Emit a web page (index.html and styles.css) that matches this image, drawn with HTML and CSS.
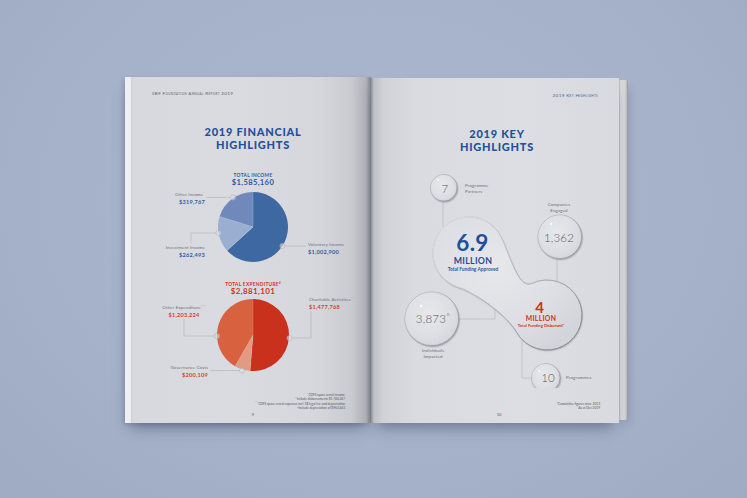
FILE: index.html
```html
<!DOCTYPE html>
<html lang="en">
<head>
<meta charset="utf-8">
<title>SBF Foundation Annual Report 2019 — Highlights</title>
<link rel="stylesheet" href="styles.css">
</head>
<body>
<div class="stage">
  <div class="spread">
    <section class="page page-left">
      <div class="runhead">SBF Foundation Annual Report 2019</div>
      <h1 class="title title-left">2019 FINANCIAL<br>HIGHLIGHTS</h1>

      <div class="total total-income">
        <div class="total-label">Total Income</div>
        <div class="total-value">$1,585,160</div>
      </div>
      <div class="chart chart-income">
        <svg class="chart-svg" viewBox="0 0 246 82" width="246" height="82">
          <path d="M128,41 L128,6 A35,35 0 1 1 102.09,64.53 Z" fill="#3e68a2"/>
          <path d="M128,41 L102.09,64.53 A35,35 0 0 1 94.6,30.55 Z" fill="#9aaed2"/>
          <path d="M128,41 L94.6,30.55 A35,35 0 0 1 128,6 Z" fill="#6f8aba"/>
          <path d="M128,41 L128,6 M128,41 L102.09,64.53 M128,41 L94.6,30.55" stroke="#dfe4ef" stroke-opacity=".45" stroke-width=".5" fill="none"/>
          <g class="leader">
            <path d="M81,11.5 H105.4"/>
            <path d="M66,57 V47 H90.9"/>
            <path d="M160,60 H181"/>
          </g>
          <g class="dot">
            <circle cx="108" cy="11.5" r="2.6"/>
            <circle cx="93.5" cy="47" r="2.6"/>
            <circle cx="157.4" cy="60" r="2.6"/>
          </g>
        </svg>
        <div class="callout c-oi"><div class="c-name">Other Income<sup>^</sup></div><div class="c-val blue">$319,767</div></div>
        <div class="callout c-ii"><div class="c-name">Investment Income</div><div class="c-val blue">$262,493</div></div>
        <div class="callout c-vi"><div class="c-name">Voluntary Income</div><div class="c-val blue">$1,002,900</div></div>
      </div>

      <div class="total total-exp">
        <div class="total-label">Total Expenditure<sup>#</sup></div>
        <div class="total-value">$2,881,101</div>
      </div>
      <div class="chart chart-exp">
        <svg class="chart-svg" viewBox="0 0 246 88" width="246" height="88">
          <path d="M128,39 L128,3 A36,36 0 1 1 125.08,74.88 Z" fill="#c9311d"/>
          <path d="M128,39 L125.08,74.88 A36,36 0 0 1 110.19,70.29 Z" fill="#e29a82"/>
          <path d="M128,39 L110.19,70.29 A36,36 0 0 1 128,3 Z" fill="#d8613f"/>
          <path d="M128,39 L128,3 M128,39 L125.08,74.88 M128,39 L110.19,70.29" stroke="#f3d4c9" stroke-opacity=".45" stroke-width=".5" fill="none"/>
          <g class="leader">
            <path d="M186,15 V42 H167.1"/>
            <path d="M59,23 V40 H89.4"/>
            <path d="M85,74.5 H114.4"/>
          </g>
          <g class="dot">
            <circle cx="164.5" cy="42" r="2.6"/>
            <circle cx="92" cy="40" r="2.6"/>
            <circle cx="117" cy="74.5" r="2.6"/>
          </g>
        </svg>
        <div class="callout c-ca"><div class="c-name">Charitable Activities<sup>^^</sup></div><div class="c-val red">$1,477,768</div></div>
        <div class="callout c-oe"><div class="c-name">Other Expenditure<sup>^^^</sup></div><div class="c-val red">$1,203,224</div></div>
        <div class="callout c-gc"><div class="c-name">Governance Costs</div><div class="c-val red">$200,109</div></div>
      </div>

      <div class="notes notes-left">
        <div><sup>^</sup>CDFS space rental income</div>
        <div><sup>^^</sup>Include disbursements $1,706,247</div>
        <div><sup>^^^</sup>CDFS space rental expenses incl. S$ legal fee and depreciation</div>
        <div><sup>#</sup>Include depreciation of $962,443</div>
      </div>
      <div class="folio folio-left">9</div>
    </section>

    <section class="page page-right">
      <div class="runhead runhead-right">2019 Key Highlights</div>
      <h1 class="title title-right">2019 KEY<br>HIGHLIGHTS</h1>

      <div class="bubbles">
        <svg class="bubble-svg" viewBox="0 0 248 230" width="248" height="230">
          <defs>
            <radialGradient id="glass" cx="42%" cy="38%" r="70%">
              <stop offset="0" stop-color="#e7e8ec"/>
              <stop offset=".65" stop-color="#dddee3"/>
              <stop offset="1" stop-color="#d2d4da"/>
            </radialGradient>
            <linearGradient id="rim" x1="0" y1="0" x2="1" y2="1">
              <stop offset="0" stop-color="#ffffff"/>
              <stop offset=".45" stop-color="#c9ccd2"/>
              <stop offset="1" stop-color="#6a6e77"/>
            </linearGradient>
            <filter id="sh" x="-20%" y="-20%" width="150%" height="150%">
              <feDropShadow dx="0.7" dy="1.1" stdDeviation="0.7" flood-color="#5b606b" flood-opacity=".32"/>
            </filter>
          </defs>
          <g class="leader">
            <path d="M72,44 V72 H82"/>
            <path d="M186,101 V132"/>
            <path d="M88,161 H124 V135"/>
            <path d="M151,182 V220 H160.5"/>
          </g>
          <g class="glass">
            <path class="blob" d="M125.6,71.9 C137.2,85.7 144.9,132.9 161.2,125.3 A35,35 0 1 1 145.7,174.5 C135.7,157.2 105.9,135.4 86.9,129.2 A36,36 0 1 1 125.6,71.9 Z"/>
            <circle cx="73" cy="30" r="13.5"/>
            <circle cx="189" cy="79" r="22"/>
            <circle cx="61" cy="161" r="27"/>
            <circle cx="175" cy="220" r="14.5"/>
          </g>
          <g class="rimg">
            <path d="M125.6,71.9 C137.2,85.7 144.9,132.9 161.2,125.3 A35,35 0 1 1 145.7,174.5 C135.7,157.2 105.9,135.4 86.9,129.2 A36,36 0 1 1 125.6,71.9 Z"/>
            <circle cx="73" cy="30" r="13"/>
            <circle cx="189" cy="79" r="21.5"/>
            <circle cx="61" cy="161" r="26.5"/>
            <circle cx="175" cy="220" r="14"/>
          </g>
          <g class="spec">
            <circle cx="67" cy="22" r="0.9"/>
            <circle cx="180" cy="66" r="1.1"/>
            <circle cx="50" cy="148" r="1.2"/>
            <circle cx="168" cy="213" r="0.9"/>
          </g>
        </svg>

        <div class="bl num n7">7</div>
        <div class="bl-side pp">Programme<br>Partners</div>
        <div class="bl-cap ce">Companies<br>Engaged</div>
        <div class="bl num n1362">1,362</div>
        <div class="bl big69">6.9</div>
        <div class="bl mil mil-b">MILLION</div>
        <div class="bl sub sub-b">Total Funding Approved</div>
        <div class="bl big4">4</div>
        <div class="bl mil mil-r">MILLION</div>
        <div class="bl sub sub-r">Total Funding Disbursed<sup>#</sup></div>
        <div class="bl num n3873">3,873<sup>^</sup></div>
        <div class="bl-cap ii">Individuals<br>Impacted</div>
        <div class="bl num n10">10</div>
        <div class="bl-side pg">Programmes</div>
      </div>

      <div class="notes notes-right">
        <div>*Cumulative figures since 2013</div>
        <div><sup>^</sup>As at Dec 2019</div>
      </div>
      <div class="folio folio-right">10</div>
    </section>
    <div class="page-edge"></div>
  </div>
</div>
</body>
</html>
```

FILE: styles.css
```css
* {
  box-sizing: border-box;
  margin: 0;
  padding: 0;
}

html,
body {
  width: 747px;
  height: 498px;
  overflow: hidden;
}

body {
  background: radial-gradient(ellipse at 50% 40%, #aab7ce 0%, #a5b2c9 60%, #9eabc3 100%);
  font-family: Lato, "Open Sans", sans-serif;
  color: #6b6e75;
}

.stage {
  padding: 77px 0 0 125px;
}

.spread {
  display: flex;
  align-items: flex-start;
}

.page {
  position: relative;
  height: 346px;
}

.page-left {
  width: 246px;
  background: linear-gradient(90deg, #eef0f4 0, #eceef2 6px, #cfd1d6 6.5px, #d8d9de 8px, #dadbe0 45%, #d6d7dc 78%, #c9cbd0 92%, #b0b2b8 98%, #7e8188 100%);
  box-shadow: 0 10px 14px -6px rgba(45, 55, 85, 0.5), -2px 2px 4px rgba(60, 70, 100, 0.2);
}

.page-right {
  width: 248px;
  height: 345px;
  margin-top: 1px;
  background: linear-gradient(90deg, #8c8f96 0, #bfc1c6 1.2%, #d1d2d7 5%, #dadbe0 18%, #dddee3 60%, #d9dadf 100%);
  box-shadow: 0 10px 14px -6px rgba(45, 55, 85, 0.5);
}

.page-edge {
  width: 9px;
  height: 340px;
  margin-top: 3px;
  background: linear-gradient(90deg, #b4b6bb 0, #dadbde 20%, #d6d7da 60%, #c8c9cc 80%, #8e9197 100%);
  border-radius: 0 2px 2px 0;
  box-shadow: 2px 6px 8px -3px rgba(45, 55, 85, 0.45);
}

/* running heads */
.runhead {
  padding-top: 13px;
  padding-left: 27px;
  font-size: 4.6px;
  line-height: 6px;
  font-variant: small-caps;
  letter-spacing: 0.35px;
  color: #5e6168;
  white-space: nowrap;
}

.runhead-right {
  padding-top: 14px;
  padding-left: 0;
  padding-right: 21px;
  text-align: right;
  color: #3a5d99;
}

/* titles */
.title {
  margin-top: 28.5px;
  font-size: 11px;
  line-height: 13px;
  font-weight: 900;
  letter-spacing: 0.75px;
  text-align: center;
  color: #22519b;
}

.title-left {
  padding-left: 10px;
}

.title-right {
  padding-left: 4px;
}

/* totals */
.total {
  padding-left: 10px;
  text-align: center;
  font-weight: 700;
  white-space: nowrap;
}

.total-income {
  margin-top: 21.5px;
  color: #2c5aa0;
}

.total-exp {
  margin-top: 13px;
  color: #d2321f;
}

.total-label {
  font-size: 4.8px;
  line-height: 6px;
  text-transform: uppercase;
  letter-spacing: 0.3px;
}

.total-value {
  font-size: 7.6px;
  line-height: 8px;
  letter-spacing: 0.35px;
}

.total-exp .total-value {
  font-size: 8px;
  line-height: 9px;
}

sup {
  font-size: 60%;
  vertical-align: 0;
  position: relative;
  top: -0.6em;
  line-height: 0;
}

/* charts */
.chart {
  position: relative;
  width: 246px;
}

.chart-income {
  height: 82px;
}

.chart-exp {
  height: 88px;
}

.chart-svg {
  position: absolute;
  left: 0;
  top: 0;
  display: block;
}

.leader path {
  fill: none;
  stroke: #a7aab1;
  stroke-width: 0.5;
}

.dot circle {
  fill: #dfe0e4;
  fill-opacity: 0.55;
  stroke: #a9acb3;
  stroke-width: 0.55;
}

.callout {
  position: absolute;
  white-space: nowrap;
}

.c-name {
  font-size: 4.4px;
  line-height: 6px;
  color: #6b6e75;
  letter-spacing: 0.15px;
}

.c-val {
  font-size: 5.6px;
  line-height: 7px;
  font-weight: 700;
  letter-spacing: 0.25px;
}

.blue {
  color: #2f5da1;
}

.red {
  color: #d6402a;
}

.c-oi {
  right: 166px;
  top: 6px;
  text-align: right;
}

.c-ii {
  right: 166px;
  top: 59px;
  text-align: right;
}

.c-vi {
  left: 183px;
  top: 56px;
}

.c-ca {
  left: 184px;
  top: 1px;
}

.c-oe {
  left: 29px;
  width: 60px;
  top: 9px;
  text-align: center;
}

.c-gc {
  right: 163px;
  top: 69px;
  text-align: right;
}

/* notes and folios */
.notes {
  text-align: right;
  font-size: 3.2px;
  line-height: 4.4px;
  color: #54575e;
  white-space: nowrap;
}

.notes-left {
  margin-top: 8.8px;
  padding-right: 26px;
}

.notes-right {
  margin-top: 13.7px;
  padding-right: 19px;
  line-height: 4.5px;
}

.folio {
  font-size: 4px;
  line-height: 5px;
  text-align: center;
  color: #55585f;
}

.folio-left {
  margin-top: 2px;
  padding-left: 10px;
}

.folio-right {
  margin-top: 1.8px;
  padding-left: 8px;
}

/* key highlights diagram */
.bubbles {
  position: relative;
  width: 248px;
  height: 230px;
  margin-top: 5.5px;
}

.bubble-svg {
  position: absolute;
  left: 0;
  top: 0;
  display: block;
}

.glass > * {
  fill: url(#glass);
  stroke: #8d9199;
  stroke-width: 0.6;
  filter: url(#sh);
}

.rimg > * {
  fill: none;
  stroke: url(#rim);
  stroke-width: 0.8;
  opacity: 0.8;
}

.spec circle {
  fill: #ffffff;
  opacity: 0.85;
}

.bl {
  position: absolute;
  transform: translate(-50%, -50%);
  white-space: nowrap;
  line-height: 1;
  text-align: center;
}

.num {
  font-weight: 300;
  color: #55585f;
  font-size: 11.5px;
  letter-spacing: 0.2px;
}

.n7 {
  left: 74px;
  top: 31px;
}

.n1362 {
  left: 188px;
  top: 80px;
}

.n3873 {
  left: 62px;
  top: 161px;
}

.n10 {
  left: 177px;
  top: 220px;
}

.big69 {
  left: 101.5px;
  top: 85px;
  font-size: 22.5px;
  line-height: 0.72;
  font-weight: 700;
  color: #1f4f98;
  letter-spacing: 0.3px;
}

.big4 {
  left: 168.5px;
  top: 149px;
  font-size: 15px;
  line-height: 0.72;
  font-weight: 700;
  color: #d0301c;
}

.mil {
  font-weight: 700;
  letter-spacing: 0.3px;
  line-height: 0.8;
}

.mil-b {
  left: 102px;
  top: 102.5px;
  font-size: 8.8px;
  color: #1f4f98;
}

.mil-r {
  left: 170px;
  top: 161.3px;
  font-size: 6.8px;
  color: #d0301c;
}

.sub {
  font-weight: 700;
  line-height: 0.9;
}

.sub-b {
  left: 102px;
  top: 110.6px;
  font-size: 4.8px;
  color: #2a5aa0;
}

.sub-r {
  left: 170px;
  top: 167.5px;
  font-size: 4.2px;
  color: #d0301c;
}

.bl-side {
  position: absolute;
  font-size: 4.4px;
  line-height: 5.5px;
  color: #6b6e75;
  white-space: nowrap;
  letter-spacing: 0.15px;
}

.pp {
  left: 94px;
  top: 25px;
}

.pg {
  left: 195px;
  top: 217px;
}

.bl-cap {
  position: absolute;
  width: 50px;
  font-size: 4.4px;
  line-height: 6px;
  color: #6b6e75;
  text-align: center;
  letter-spacing: 0.15px;
}

.ce {
  left: 163px;
  top: 44px;
}

.ii {
  left: 37px;
  top: 190px;
}
```
